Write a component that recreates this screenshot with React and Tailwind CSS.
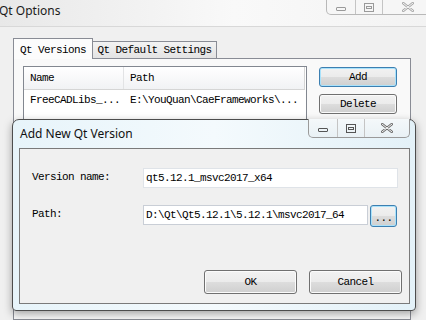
import React from "react";

const btnFace =
  "bg-[linear-gradient(#f2f2f2_0%,#ebebeb_50%,#dddddd_50%,#cfcfcf_100%)]";

function WinButton({ label, focused = false, className = "" }) {
  return (
    <div
      className={`flex items-center justify-center rounded-[3px] border ${btnFace} ${
        focused
          ? "border-[#3c7fb1] shadow-[inset_0_0_0_1px_#a9e2fb]"
          : "border-[#707070] shadow-[inset_0_0_0_1px_#fbfbfb]"
      } ${className}`}
    >
      {label}
    </div>
  );
}

function CaptionButtons({ inactive = false, className = "" }) {
  const glyph = inactive ? "border-[#9a9a9a]" : "border-[#555]";
  const xStroke = inactive ? "#a8a8a8" : "#6b6b6b";
  return (
    <div
      className={`flex items-stretch rounded-b-[5px] border border-t-0 ${
        inactive ? "border-[#b8b8b8] bg-[#f6f6f6]" : "border-[#9a9a9a] bg-[linear-gradient(#f4f8fa,#e9f1f5)]"
      } ${className}`}
    >
      <div className="flex w-[29px] items-center justify-center border-r border-[#c4c4c4]">
        <div className={`mt-[3px] h-[4px] w-[10px] rounded-[1px] border ${glyph}`} />
      </div>
      <div className="flex w-[27px] items-center justify-center border-r border-[#c4c4c4]">
        <div className={`flex h-[9px] w-[10px] items-center justify-center border ${glyph}`}>
          <div className={`h-[3px] w-[6px] border ${glyph}`} />
        </div>
      </div>
      <div className="flex flex-1 items-center justify-center">
        <svg width="12" height="10" viewBox="0 0 12 10">
          <path
            d="M1 1 L11 9 M11 1 L1 9"
            stroke={xStroke}
            strokeWidth="2.6"
            strokeLinecap="round"
          />
          <path
            d="M1 1 L11 9 M11 1 L1 9"
            stroke="#f6f6f6"
            strokeWidth="1"
            strokeLinecap="round"
          />
        </svg>
      </div>
    </div>
  );
}

export default function App() {
  const mono = "font-['Liberation_Mono',monospace] text-[11px] tracking-[-0.6px]";
  const sans = "font-['Noto_Sans',sans-serif] text-[12px]";

  return (
    <div className="relative h-[320px] w-[426px] overflow-hidden bg-[#f0f0f0] text-black">
      {/* Qt Options window (behind) */}
      <div className="flex h-full flex-col">
        <div className="flex h-[27px] shrink-0 items-start justify-between border-b border-[#d8d8d8] bg-[linear-gradient(to_right,#e8e8e8,#f9f9f9_55%,#f3f3f3)]">
          <span className={`${sans} -ml-[1px] pt-[3px] leading-[16px] text-[#1a1a1a]`}>
            Qt Options
          </span>
          <CaptionButtons inactive className="-mr-[8px] h-[15px] w-[108px]" />
        </div>

        <div className={`${mono} flex flex-1 flex-col pl-[13px] pt-[11px]`}>
          {/* tabs */}
          <div className="relative z-10 flex h-[20px] items-end">
            <div className="-mb-[1px] flex h-[21px] w-[80px] items-start justify-center border border-b-0 border-[#898c95] bg-[#fcfcfc] pt-[3px]">
              Qt Versions
            </div>
            <div className="flex h-[17px] w-[124px] items-center justify-center border border-b-0 border-l-0 border-[#898c95] bg-[linear-gradient(#f3f3f3,#e3e3e3)]">
              Qt Default Settings
            </div>
          </div>
          <div className="flex w-[398px] flex-1 gap-[12px] border border-[#898c95] bg-[#f9f9f9] pl-[9px] pt-[7px]">
            <div className="flex h-[120px] w-[284px] flex-col border border-[#828790] bg-white">
              <div className="flex h-[23px] w-[281px] border-b border-[#d5d5d5] bg-[linear-gradient(#ffffff,#f1f2f4)]">
                <div className="flex w-[100px] items-center border-r border-[#e2e3e5] pl-[6px]">
                  Name
                </div>
                <div className="flex flex-1 items-center border-r border-[#d5d5d5] pl-[6px]">
                  Path
                </div>
              </div>
              <div className="flex h-[20px] items-center">
                <div className="w-[100px] pl-[6px]">FreeCADLibs_...</div>
                <div className="pl-[6px]">E:\YouQuan\CaeFrameworks\...</div>
              </div>
            </div>
            <div className="flex flex-col gap-[7px] pt-[1px]">
              <WinButton label="Add" focused className="h-[20px] w-[78px]" />
              <WinButton label="Delete" className="h-[20px] w-[78px]" />
            </div>
          </div>
        </div>
      </div>

      {/* Add New Qt Version dialog */}
      <div className="absolute left-[12px] top-[119px] flex h-[192px] w-[404px] flex-col rounded-t-[7px] rounded-b-[4px] border border-[#4d4d4d] bg-[linear-gradient(to_right,#e7f4fa,#f4fafd_50%,#e3f1f8)] shadow-[0_3px_8px_rgba(0,0,0,0.35)]">
        <div className="flex h-[28px] shrink-0 items-start justify-between">
          <span className={`${sans} pl-[7px] pt-[6px] leading-[16px] text-[#111]`}>
            Add New Qt Version
          </span>
          <CaptionButtons className="-mt-[1px] mr-[5px] h-[19px] w-[102px]" />
        </div>
        <div
          className={`${mono} mb-[6px] ml-[6px] mr-[5px] flex flex-1 flex-col border border-[#7a7a7a] bg-[#f0f0f0] pl-[12px] pt-[19px]`}
        >
          <div className="flex items-start">
            <div className="w-[111px] pt-[1px]">Version name:</div>
            <div className="flex h-[20px] w-[255px] items-center border border-[#dfe3e8] bg-white pl-[2px]">
              qt5.12.1_msvc2017_x64
            </div>
          </div>
          <div className="mt-[17px] flex items-start">
            <div className="w-[111px] pt-[1px]">Path:</div>
            <div className="flex h-[20px] w-[225px] items-center border border-[#c9ced6] bg-white pl-[2px]">
              D:\Qt\Qt5.12.1\5.12.1\msvc2017_64
            </div>
            <WinButton label="..." focused className="ml-[2px] h-[22px] w-[27px] pt-[4px]" />
          </div>
          <div className="mt-auto flex justify-end gap-[12px] pb-[9px] pr-[7px]">
            <WinButton label="OK" className="h-[24px] w-[93px]" />
            <WinButton label="Cancel" className="h-[24px] w-[93px]" />
          </div>
        </div>
      </div>
    </div>
  );
}
